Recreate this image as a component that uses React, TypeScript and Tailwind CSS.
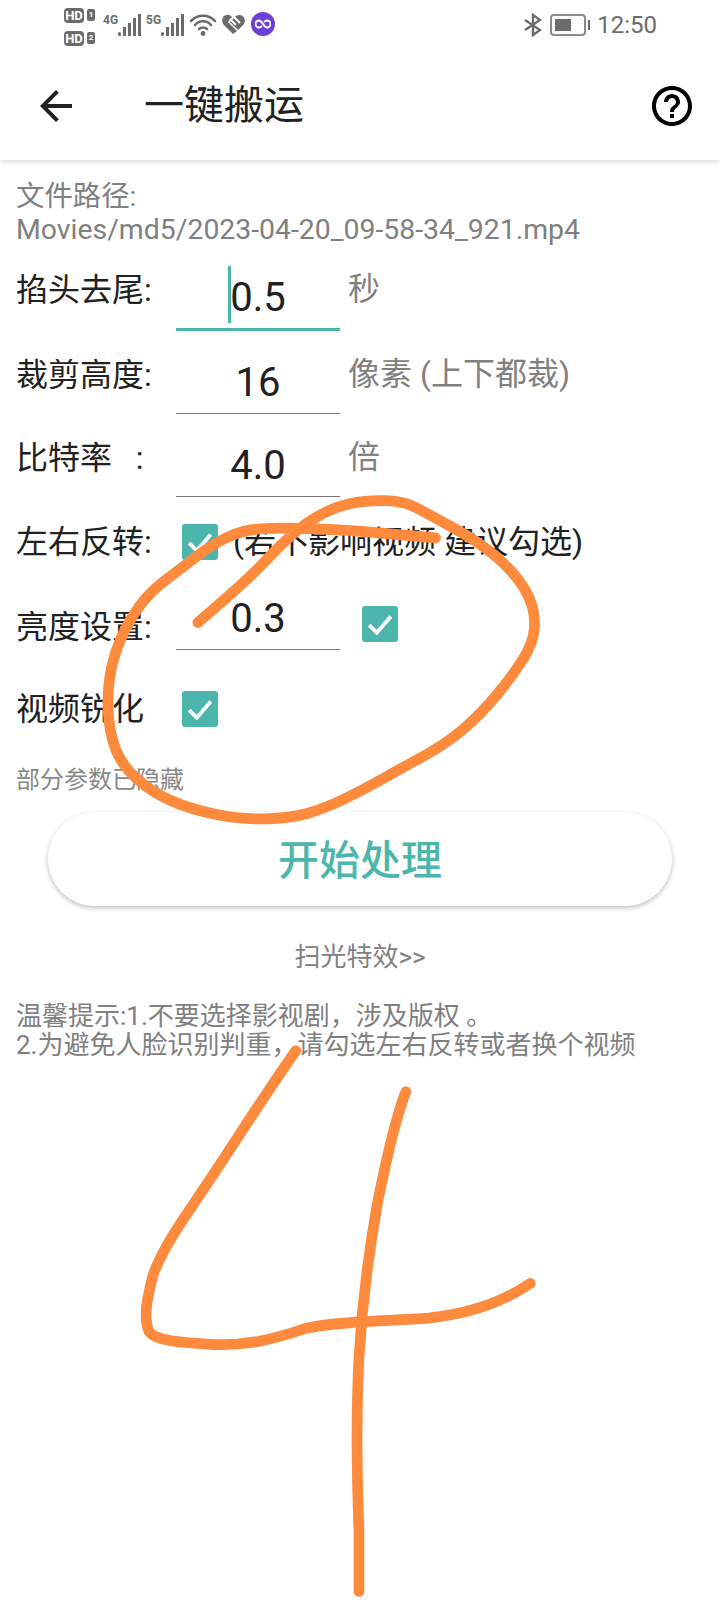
const cjk = "font-['Roboto','Noto_Sans_CJK_SC',sans-serif]"

function SignalBars() {
  return (
    <svg width="24" height="24" viewBox="0 0 24 24" fill="#6b6b6b">
      <rect x="0" y="19" width="3" height="4" rx="1.5" />
      <rect x="5" y="14" width="3" height="9" />
      <rect x="10" y="10" width="3" height="13" />
      <rect x="15" y="5" width="3" height="18" />
      <rect x="20" y="1" width="3" height="22" />
    </svg>
  )
}

function HdBadge({ n }: { n: string }) {
  return (
    <div className="flex items-center gap-[3px] h-[15px]">
      <span className="bg-[#6b6b6b] text-white rounded-[4px] w-[20px] h-[15px] flex items-center justify-center text-[13px] font-bold leading-none font-['Roboto',sans-serif]">
        HD
      </span>
      <span className="bg-[#6b6b6b] text-white rounded-[2px] w-[8px] h-[12px] flex items-center justify-center text-[8px] font-bold leading-none font-['Roboto',sans-serif]">
        {n}
      </span>
    </div>
  )
}

function StatusBar() {
  return (
    <div className="h-[52px] flex items-center pl-[64px] pr-[63px] bg-[#fefefe]">
      <div className="flex flex-col gap-[8px] mt-[1px]">
        <HdBadge n="1" />
        <HdBadge n="2" />
      </div>
      <div className="flex items-end ml-[8px] -mt-[3px]">
        <span className="text-[12px] font-bold text-[#6b6b6b] leading-none self-start mt-[1px] font-['Roboto',sans-serif]">4G</span>
        <SignalBars />
      </div>
      <div className="flex items-end ml-[4px] -mt-[3px]">
        <span className="text-[12px] font-bold text-[#6b6b6b] leading-none self-start mt-[1px] font-['Roboto',sans-serif]">5G</span>
        <SignalBars />
      </div>
      <svg className="ml-[4px] -mt-[3px]" width="28" height="24" viewBox="0 0 28 24" fill="none" stroke="#6b6b6b" strokeWidth="2.6" strokeLinecap="round">
        <path d="M2 8 C8 1 20 1 26 8" />
        <path d="M6 12 C10 7 18 7 22 12" />
        <path d="M10 16 C12 14 16 14 18 16" />
        <circle cx="14" cy="20.5" r="2.4" fill="#6b6b6b" stroke="none" />
      </svg>
      <svg className="ml-[5px] -mt-[4px]" width="23" height="20" viewBox="0 0 23 20" fill="#6b6b6b">
        <path d="M11 20 L2 11 C-1 8 0 3 3 1.5 C6 0 8 1 10 3 L6 8 L15 17 Z" />
        <path d="M12 4 C14 1 18 0 20.5 2 C23.5 4.500 23.500 8 21 11 L16 16 L8 8 Z" fill="#6b6b6b" />
        <path d="M8 5 L14 11 M12 3 L18 9" stroke="#fefefe" strokeWidth="2" />
      </svg>
      <div className="ml-[6px] -mt-[4px] w-[24px] h-[24px] rounded-full bg-[#6d3fd4] flex items-center justify-center">
        <svg width="16" height="10" viewBox="0 0 16 10" fill="none" stroke="#fff" strokeWidth="2">
          <path d="M8 5 C6 2 5 1.500 4 1.500 A3.500 3.500 0 0 0 4 8.500 C5 8.500 6 8 7 7 M8 5 C10 8 11 8.500 12 8.500 A3.500 3.500 0 0 0 12 1.500 C11 1.500 10 2 9 3" />
        </svg>
      </div>
      <div className="flex-1" />
      <svg className="-mt-[2px]" width="18" height="24" viewBox="0 0 18 24" fill="none" stroke="#6b6b6b" strokeWidth="2.4">
        <path d="M1 7 L16 17 L9 22 V2 L16 7 L1 17" />
      </svg>
      <div className="ml-[8px] w-[36px] h-[22px] border-2 border-[#8a8a8a] rounded-[4px] p-[3px] -mt-[2px]">
        <div className="w-[16px] h-full bg-[#6b6b6b]" />
      </div>
      <div className="ml-[2px] w-[2px] h-[10px] bg-[#6b6b6b] -mt-[2px]" />
      <span className="ml-[7px] text-[24px] leading-none text-[#6b6b6b] -mt-[2px] font-['Roboto',sans-serif]">12:50</span>
    </div>
  )
}

function Toolbar() {
  return (
    <div className="h-[108px] flex items-center relative">
      <svg className="ml-[32px]" width="48" height="48" viewBox="0 0 24 24" fill="#212121">
        <path d="M20 11H7.83l5.59-5.59L12 4l-8 8 8 8 1.41-1.41L7.83 13H20v-2z" />
      </svg>
      <h1 className={`ml-[64px] text-[40px] leading-none font-normal text-[#212121] ${cjk}`}>一键搬运</h1>
      <svg className="ml-auto mr-[24px]" width="48" height="48" viewBox="0 0 24 24" fill="#000">
        <path d="M11 18h2v-2h-2v2zm1-16C6.48 2 2 6.48 2 12s4.48 10 10 10 10-4.48 10-10S17.52 2 12 2zm0 18c-4.41 0-8-3.59-8-8s3.59-8 8-8 8 3.59 8 8-3.59 8-8 8zm0-14c-2.21 0-4 1.79-4 4h2c0-1.1.9-2 2-2s2 .9 2 2c0 2-3 1.75-3 5h2c0-2.25 3-2.5 3-5 0-2.21-1.79-4-4-4z" />
      </svg>
    </div>
  )
}

function Checkbox({ className = '' }: { className?: string }) {
  return (
    <div className={`w-[36px] h-[36px] rounded-[3px] bg-[#4db6ac] flex items-center justify-center ${className}`}>
      <svg width="28" height="28" viewBox="0 0 26 26" fill="none" stroke="#fff" strokeWidth="3.5">
        <path d="M3 14 L10 21 L23 6" />
      </svg>
    </div>
  )
}

function FieldRow({ label, value, unit, active }: { label: string; value: string; unit?: string; active?: boolean }) {
  return (
    <div className={`flex ${active ? 'h-[85px]' : 'h-[83px]'}`}>
      <div className="w-[160px] pt-[25px] text-[32px] leading-[38px] text-[#212121]">{label}</div>
      <div className={`w-[164px] relative flex justify-center pt-[28px] text-[40px] leading-[47px] text-[#212121] ${active ? 'border-b-[3px] border-[#4db6ac]' : 'border-b border-[#757575]'}`}>
        {value}
        {active && <div className="absolute left-[52px] top-[20px] w-[3px] h-[57px] bg-[#4db6ac]" />}
      </div>
      {unit && <div className="ml-[8px] pt-[24px] text-[32px] leading-[38px] text-[#808080]">{unit}</div>}
    </div>
  )
}

const circleStroke = [
  [194, 610], [240, 571], [274, 535], [300, 512], [330, 496], [360, 490], [397, 491], [424, 506],
  [461, 526], [491, 548], [514, 574], [525, 601], [523, 630], [502, 663], [472, 699], [439, 728],
  [397, 751], [356, 774], [319, 792], [285, 802], [235, 803], [187, 793], [150, 777], [120, 751],
  [107, 718], [105, 672], [116, 627], [142, 584], [176, 558], [210, 532], [240, 519], [274, 517],
  [337, 519], [427, 527],
]

// rounds a hand-drawn stroke through the midpoints of its points
function smooth(points: number[][]) {
  let d = `M${points[0][0]} ${points[0][1]}`
  for (let i = 1; i < points.length - 1; i++) {
    const midX = (points[i][0] + points[i + 1][0]) / 2
    const midY = (points[i][1] + points[i + 1][1]) / 2
    d += ` Q${points[i][0]} ${points[i][1]} ${midX} ${midY}`
  }
  const last = points[points.length - 1]
  return `${d} L${last[0]} ${last[1]}`
}

// the hand-drawn scribbles sit on top of the whole screen
function Scribbles() {
  return (
    <svg className="absolute inset-0 pointer-events-none" width="720" height="1600" viewBox="0 0 706 1568" fill="none" stroke="#fd8a3d" strokeWidth="10.5" strokeLinecap="round" strokeLinejoin="round">
      <path d={smooth(circleStroke)} />
      <path d="M290 1030 C265 1065 230 1120 200 1165 C180 1195 160 1222 150 1250 C145 1270 140 1290 146 1305 C152 1315 180 1316 210 1318 C240 1319 265 1314 300 1302 C330 1295 380 1295 420 1292 C460 1288 495 1275 520 1258" />
      <path d="M398 1070 C388 1095 378 1140 370 1180 C362 1225 355 1280 352 1330 C349 1390 350 1450 352 1500 L352 1560" />
    </svg>
  )
}

export default function App() {
  return (
    <div className={`relative w-[720px] h-[1600px] bg-white overflow-hidden ${cjk}`}>
      <div className="bg-white shadow-[0_2px_6px_rgba(0,0,0,0.14)] relative">
        <StatusBar />
        <Toolbar />
      </div>

      <div className="px-[16px] pt-[20px]">
        <div className="text-[28.4px] leading-[33px] text-[#808080] h-[66px]">
          文件路径:
          <br />
          Movies/md5/2023-04-20_09-58-34_921.mp4
        </div>

        <FieldRow label="掐头去尾:" value="0.5" unit="秒" active />
        <FieldRow label="裁剪高度:" value="16" unit="像素 (上下都裁)" />
        <FieldRow label="比特率&nbsp;&nbsp;&nbsp;:" value="4.0" unit="倍" />

        <div className="h-[90px] flex items-center">
          <div className="w-[166px] text-[32px] leading-[38px] text-[#212121]">左右反转:</div>
          <Checkbox />
          <div className="ml-[15px] text-[32px] leading-[38px] text-[#212121]">(若不影响视频 建议勾选)</div>
        </div>

        <div className="h-[63px] flex">
          <div className="w-[160px] pt-[21px] text-[32px] leading-[38px] text-[#212121]">亮度设置:</div>
          <div className="w-[164px] flex justify-center pt-[8px] text-[40px] leading-[47px] text-[#212121] border-b border-[#757575]">0.3</div>
          <Checkbox className="ml-[22px] mt-[19px]" />
        </div>

        <div className="h-[118px] flex items-center">
          <div className="w-[166px] text-[32px] leading-[38px] text-[#212121]">视频锐化</div>
          <Checkbox />
        </div>

        <div className="text-[24px] leading-[28px] text-[#888888] -mt-[2px]">部分参数已隐藏</div>

        <button className="block mt-[18px] ml-[32px] pt-[6px] w-[624px] h-[94px] rounded-full bg-white shadow-[0_2px_5px_rgba(0,0,0,0.25)] text-[41px] font-medium text-[#4db6ac]">
          开始处理
        </button>

        <div className="text-center text-[26px] leading-[30px] text-[#808080] mt-[36px]">扫光特效&gt;&gt;</div>

        <div className="text-[26px] leading-[29px] text-[#808080] mt-[30px]">
          温馨提示:1.不要选择影视剧，涉及版权 。
          <br />
          2.为避免人脸识别判重，请勾选左右反转或者换个视频
        </div>
      </div>

      <Scribbles />
    </div>
  )
}
